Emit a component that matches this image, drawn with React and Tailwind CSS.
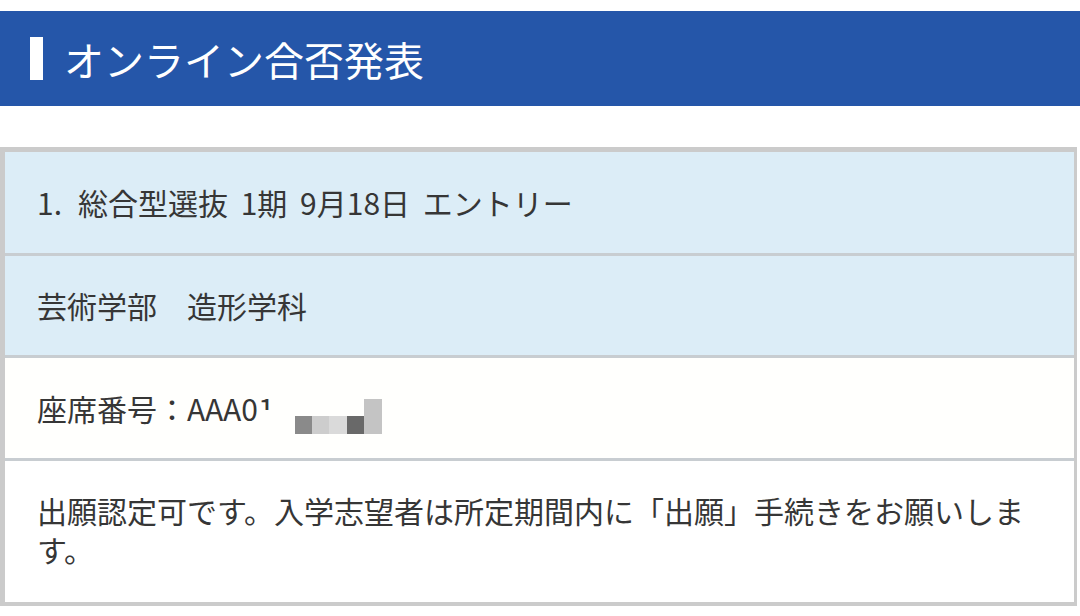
export default function App() {
  const font = { fontFamily: '"Noto Sans CJK JP", "Noto Sans", sans-serif' };
  return (
    <div className="w-[1080px] h-[616px] bg-white overflow-hidden pt-[11px]" style={font}>
      <header className="h-[95px] bg-[#2556a9] flex items-center pl-[30px]">
        <div className="w-[13px] h-[43px] bg-white"></div>
        <h1 className="ml-[21px] text-[40px] leading-none text-white font-normal">オンライン合否発表</h1>
      </header>

      <div className="mt-[41px] w-[1077px] border-t-[5px] border-l-[5px] border-r-[3px] border-b-[4px] border-[#cbcbcb] text-[30px] text-[#363636]">
        <div className="h-[104px] bg-[#dcedf7] flex items-center pl-[32px] border-b-[3px] border-[#c8cdd1]">
          <span className="mr-[16px]">1.</span>
          <span className="[word-spacing:6px]">総合型選抜 1期 9月18日 エントリー</span>
        </div>
        <div className="h-[102px] bg-[#dcedf7] flex items-center pl-[32px] border-b-[3px] border-[#c8cdd1]">
          芸術学部　造形学科
        </div>
        <div className="h-[103px] bg-[#fffffd] flex items-center pl-[32px] border-b-[3px] border-[#c8cdd1] leading-[43px]">
          <span>
            座席番号：AAA0<span className="inline-block h-[23px] overflow-hidden align-top">1</span>
          </span>
          <div className="ml-[20px] mt-[16px] flex items-end">
            <div className="w-[17px] h-[18px] bg-[#8a8a8a]"></div>
            <div className="w-[17px] h-[18px] bg-[#cdcdcd]"></div>
            <div className="w-[18px] h-[18px] bg-[#dadada]"></div>
            <div className="w-[17px] h-[18px] bg-[#696969]"></div>
            <div className="w-[18px] h-[35px] bg-[#c4c4c4]"></div>
          </div>
        </div>
        <div className="bg-white pl-[32px] pr-[32px] pt-[30px] pb-[33px] leading-[39px]">
          出願認定可です。入学志望者は所定期間内に「出願」手続きをお願いします。
        </div>
      </div>
    </div>
  );
}
